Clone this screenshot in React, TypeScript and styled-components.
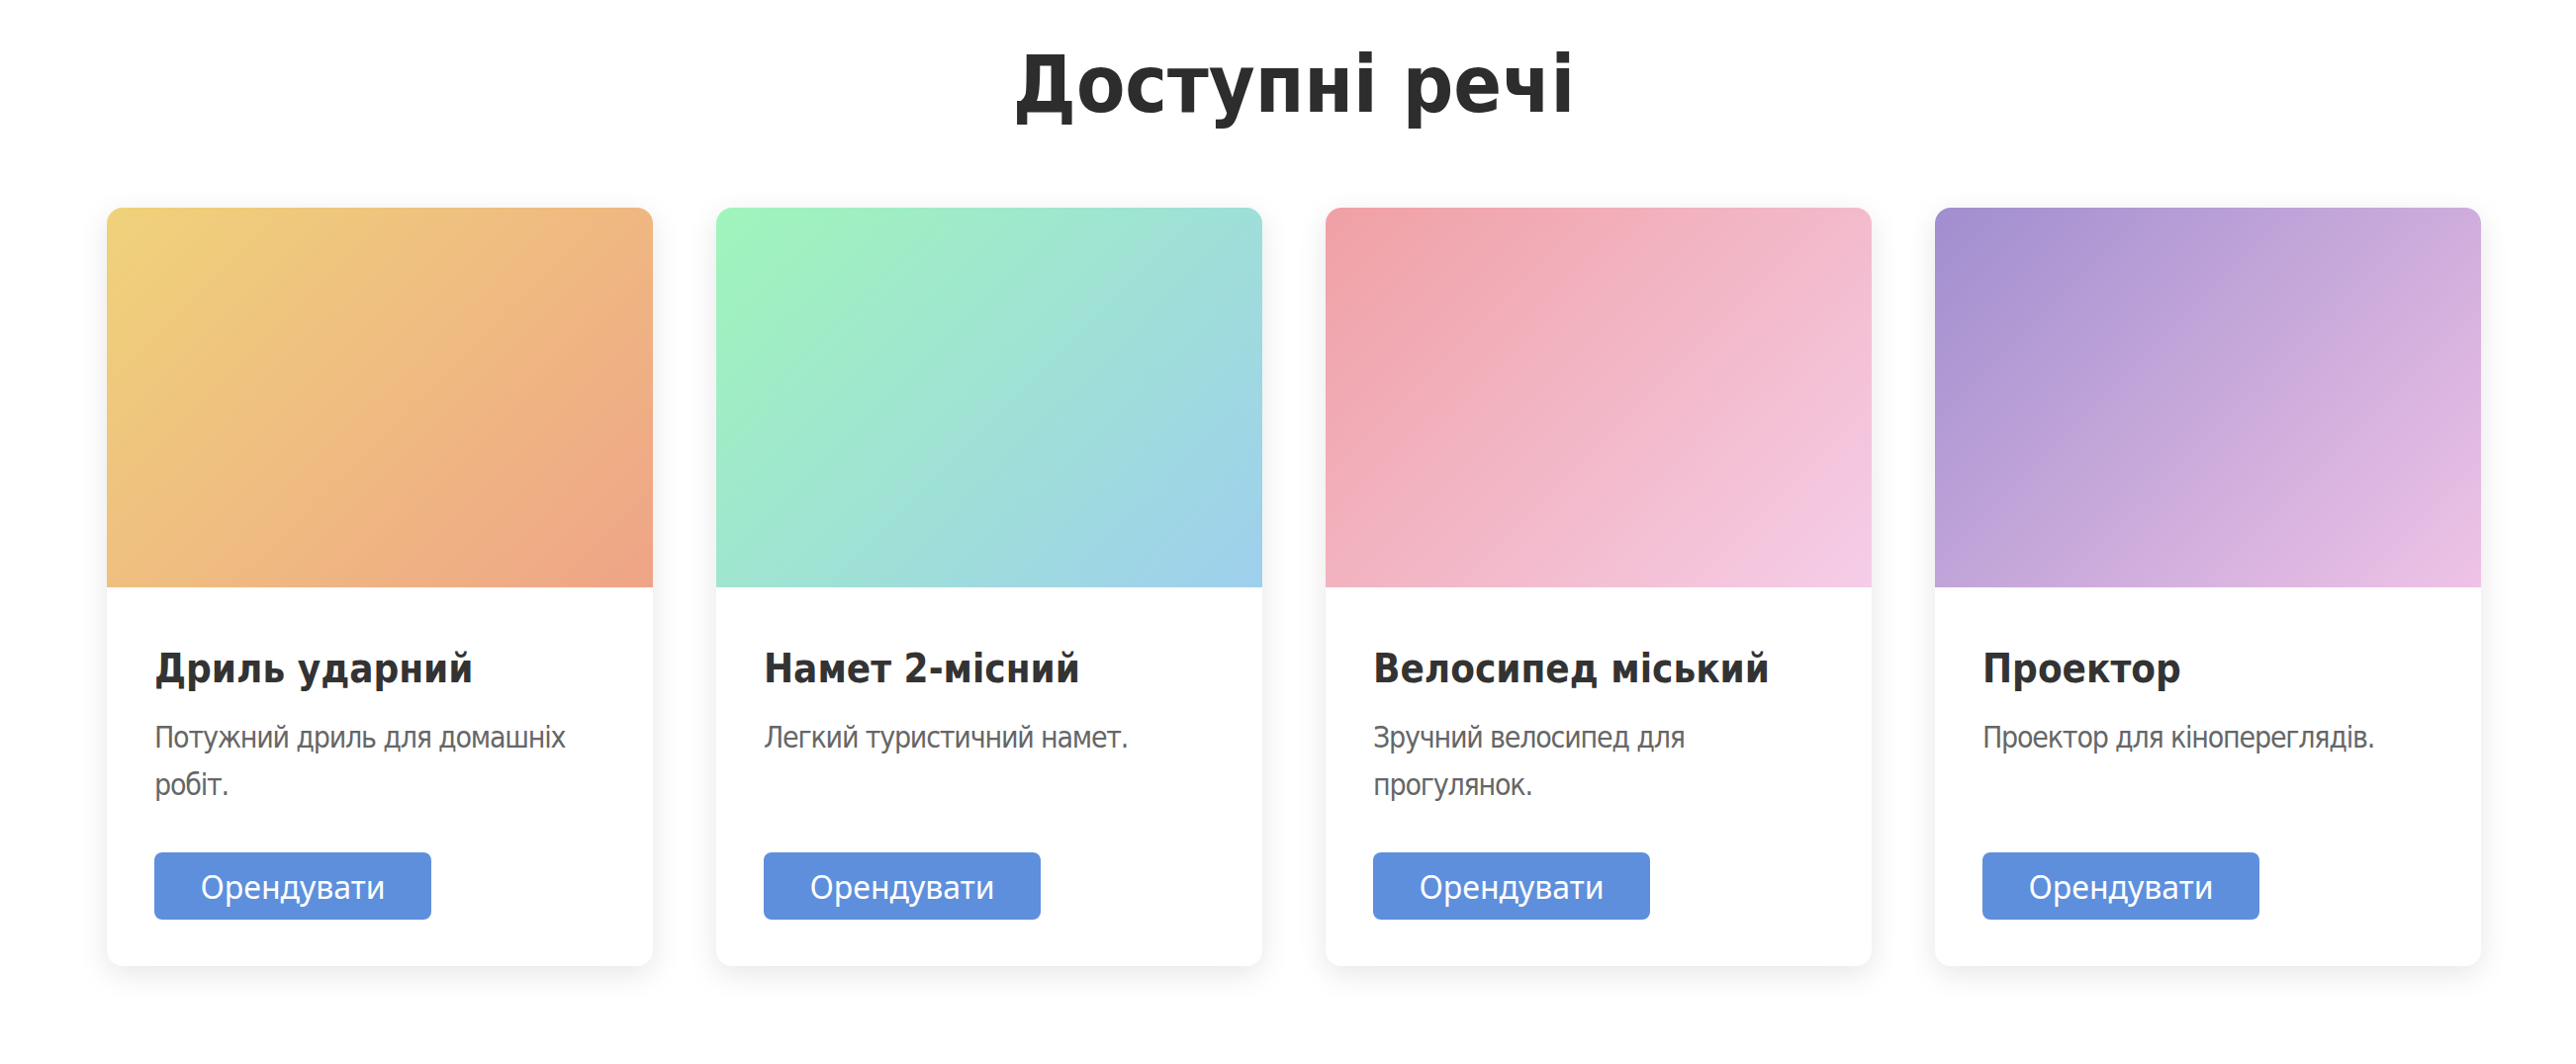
import React from "react";
import styled, { createGlobalStyle } from "styled-components";

const GlobalStyle = createGlobalStyle`
  html, body {
    margin: 0;
    padding: 0;
    background: #ffffff;
  }
  body {
    font-family: "DejaVu Sans Condensed", "DejaVu Sans", Tahoma, sans-serif;
  }
`;

const Page = styled.main`
  padding: 39px 96px 80px 108px;
`;

const Heading = styled.h1`
  margin: 0 0 78px;
  text-align: center;
  font-size: 80px;
  font-weight: 700;
  line-height: normal;
  color: #2d2d2d;
`;

const Grid = styled.section`
  display: grid;
  grid-template-columns: repeat(4, 1fr);
  gap: 64px;
`;

const Card = styled.article`
  display: flex;
  flex-direction: column;
  background: #ffffff;
  border-radius: 16px;
  overflow: hidden;
  box-shadow: 0 8px 30px rgba(0, 0, 0, 0.1);
`;

const Picture = styled.div<{ $from: string; $to: string }>`
  height: 384px;
  background: linear-gradient(135deg, ${(p) => p.$from} 0%, ${(p) => p.$to} 100%);
`;

const Body = styled.div`
  flex: 1;
  display: flex;
  flex-direction: column;
  padding: 59px 48px 47px;
`;

const Title = styled.h3`
  margin: 0 0 23px;
  font-size: 40px;
  font-weight: 700;
  line-height: normal;
  color: #333333;
`;

const Description = styled.p`
  margin: 0 0 44px;
  font-size: 30px;
  letter-spacing: -1.2px;
  line-height: 48px;
  color: #666666;
`;

const RentButton = styled.button`
  margin-top: auto;
  align-self: flex-start;
  height: 68px;
  width: 280px;
  padding: 0;
  border: none;
  border-radius: 8px;
  background: #5e8fdc;
  color: #ffffff;
  font-family: "Noto Sans", "Open Sans", sans-serif;
  font-size: 32px;
  cursor: pointer;
`;

const items = [
  {
    title: "Дриль ударний",
    text: "Потужний дриль для домашніх робіт.",
    from: "#efd27a",
    to: "#efa487",
  },
  {
    title: "Намет 2-місний",
    text: "Легкий туристичний намет.",
    from: "#a0f5ba",
    to: "#9ecfee",
  },
  {
    title: "Велосипед міський",
    text: "Зручний велосипед для прогулянок.",
    from: "#f0a0a4",
    to: "#f5cde8",
  },
  {
    title: "Проектор",
    text: "Проектор для кінопереглядів.",
    from: "#a08ecf",
    to: "#efc3e6",
  },
];

export default function App() {
  return (
    <>
      <GlobalStyle />
      <Page>
        <Heading>Доступні речі</Heading>
        <Grid>
          {items.map((item) => (
            <Card key={item.title}>
              <Picture $from={item.from} $to={item.to} />
              <Body>
                <Title>{item.title}</Title>
                <Description>{item.text}</Description>
                <RentButton>Орендувати</RentButton>
              </Body>
            </Card>
          ))}
        </Grid>
      </Page>
    </>
  );
}
